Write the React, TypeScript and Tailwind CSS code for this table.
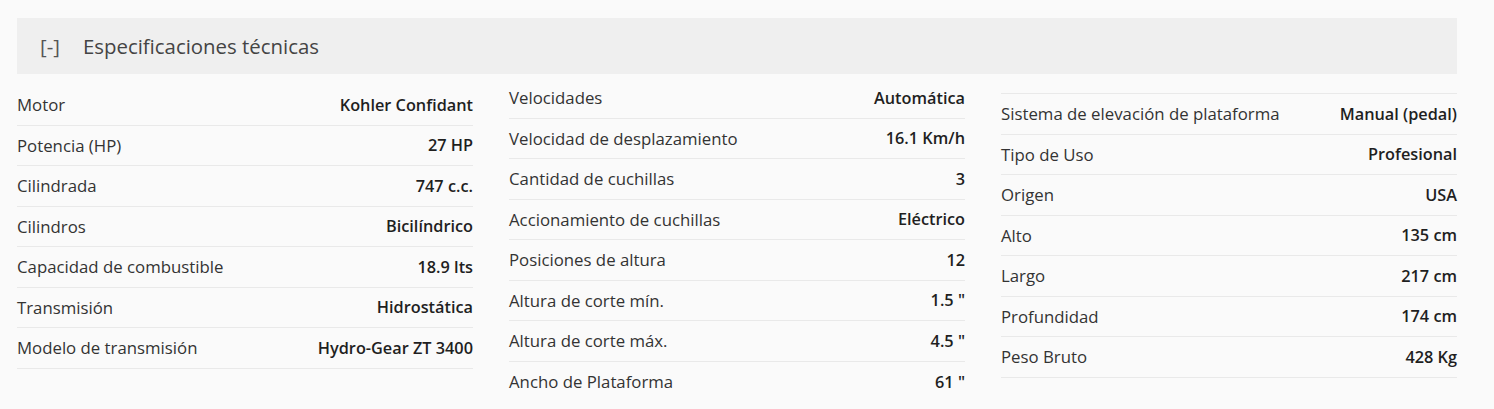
const COL1: [string, string][] = [
  ['Motor', 'Kohler Confidant'],
  ['Potencia (HP)', '27 HP'],
  ['Cilindrada', '747 c.c.'],
  ['Cilindros', 'Bicilíndrico'],
  ['Capacidad de combustible', '18.9 lts'],
  ['Transmisión', 'Hidrostática'],
  ['Modelo de transmisión', 'Hydro-Gear ZT 3400'],
];

const COL2: [string, string][] = [
  ['Velocidades', 'Automática'],
  ['Velocidad de desplazamiento', '16.1 Km/h'],
  ['Cantidad de cuchillas', '3'],
  ['Accionamiento de cuchillas', 'Eléctrico'],
  ['Posiciones de altura', '12'],
  ['Altura de corte mín.', '1.5 "'],
  ['Altura de corte máx.', '4.5 "'],
  ['Ancho de Plataforma', '61 "'],
];

const COL3: [string, string][] = [
  ['Sistema de elevación de plataforma', 'Manual (pedal)'],
  ['Tipo de Uso', 'Profesional'],
  ['Origen', 'USA'],
  ['Alto', '135 cm'],
  ['Largo', '217 cm'],
  ['Profundidad', '174 cm'],
  ['Peso Bruto', '428 Kg'],
];

function SpecRow({ label, value, last }: { label: string; value: string; last?: boolean }) {
  return (
    <div
      className={
        'flex items-center justify-between h-[40.5px] ' +
        (last ? '' : 'border-b border-[#e9e9e9]')
      }
    >
      <span className="text-[16.8px] text-[#333333]">{label}</span>
      <span className="text-[16.3px] font-semibold text-[#1f1f1f]">{value}</span>
    </div>
  );
}

export default function App() {
  return (
    <div
      className="min-h-[409px] bg-[#fafafa] pl-[17px] pr-[37px] pt-[18px]"
      style={{ fontFamily: '"Open Sans", "Liberation Sans", sans-serif' }}
    >
      {/* Header */}
      <div className="flex items-center h-[56px] bg-[#efefef] pl-[23px] text-[20.4px] text-[#444444]">
        <span className="text-[#555555] mr-[23px]">[-]</span>
        <span>Especificaciones técnicas</span>
      </div>

      {/* Spec columns */}
      <div className="grid grid-cols-3 gap-x-[36px]">
        <div className="mt-[11px]">
          {COL1.map(([l, v]) => (
            <SpecRow key={l} label={l} value={v} />
          ))}
        </div>
        <div className="mt-[4px]">
          {COL2.map(([l, v], i) => (
            <SpecRow key={l} label={l} value={v} last={i === COL2.length - 1} />
          ))}
        </div>
        <div className="mt-[19px] border-t border-[#e9e9e9]">
          {COL3.map(([l, v]) => (
            <SpecRow key={l} label={l} value={v} />
          ))}
        </div>
      </div>
    </div>
  );
}
